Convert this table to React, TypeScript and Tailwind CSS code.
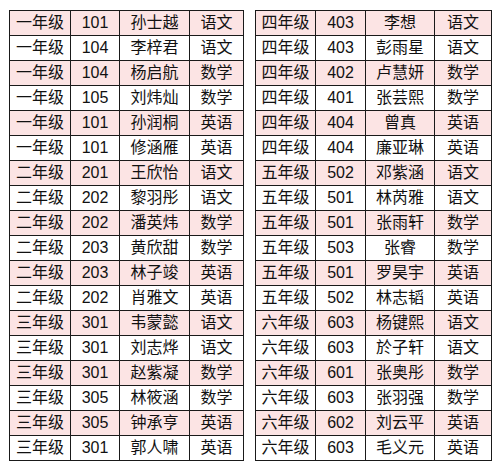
/* Class roster: two side-by-side tables, alternating pink rows */

type Row = [string, string, string, string];

const left: Row[] = [
  ["一年级", "101", "孙士越", "语文"],
  ["一年级", "104", "李梓君", "语文"],
  ["一年级", "104", "杨启航", "数学"],
  ["一年级", "105", "刘炜灿", "数学"],
  ["一年级", "101", "孙润桐", "英语"],
  ["一年级", "101", "修涵雁", "英语"],
  ["二年级", "201", "王欣怡", "语文"],
  ["二年级", "202", "黎羽彤", "语文"],
  ["二年级", "202", "潘英炜", "数学"],
  ["二年级", "203", "黄欣甜", "数学"],
  ["二年级", "203", "林子竣", "英语"],
  ["二年级", "202", "肖雅文", "英语"],
  ["三年级", "301", "韦蒙懿", "语文"],
  ["三年级", "301", "刘志烨", "语文"],
  ["三年级", "301", "赵紫凝", "数学"],
  ["三年级", "305", "林筱涵", "数学"],
  ["三年级", "305", "钟承亨", "英语"],
  ["三年级", "301", "郭人啸", "英语"],
];

const right: Row[] = [
  ["四年级", "403", "李想", "语文"],
  ["四年级", "403", "彭雨星", "语文"],
  ["四年级", "402", "卢慧妍", "数学"],
  ["四年级", "401", "张芸熙", "数学"],
  ["四年级", "404", "曾真", "英语"],
  ["四年级", "404", "廉亚琳", "英语"],
  ["五年级", "502", "邓紫涵", "语文"],
  ["五年级", "501", "林芮雅", "语文"],
  ["五年级", "501", "张雨轩", "数学"],
  ["五年级", "503", "张睿", "数学"],
  ["五年级", "501", "罗昊宇", "英语"],
  ["五年级", "502", "林志韬", "英语"],
  ["六年级", "603", "杨键熙", "语文"],
  ["六年级", "603", "於子轩", "语文"],
  ["六年级", "601", "张奥彤", "数学"],
  ["六年级", "603", "张羽强", "数学"],
  ["六年级", "602", "刘云平", "英语"],
  ["六年级", "603", "毛义元", "英语"],
];

function Table({ rows, widths }: { rows: Row[]; widths: string[] }) {
  return (
    <div className="border-l border-t border-[#1a1a1a]">
      {rows.map((row, i) => (
        <div key={i} className={`flex h-[25px] ${i % 2 === 0 ? "bg-[#fce4e4]" : "bg-white"}`}>
          {row.map((cell, j) => (
            <div
              key={j}
              className={`${widths[j]} flex items-center justify-center border-r border-b border-[#1a1a1a] text-[16px] leading-none text-[#111]`}
            >
              {cell}
            </div>
          ))}
        </div>
      ))}
    </div>
  );
}

export default function App() {
  return (
    <div
      className="h-[471px] w-[500px] bg-white pl-[9px] pt-[10px]"
      style={{ fontFamily: '"Liberation Sans", "Noto Sans CJK SC", sans-serif' }}
    >
      <div className="flex gap-[11px]">
        <Table rows={left} widths={["w-[61px]", "w-[49px]", "w-[70px]", "w-[54px]"]} />
        <Table rows={right} widths={["w-[60px]", "w-[50px]", "w-[69px]", "w-[57px]"]} />
      </div>
    </div>
  );
}
